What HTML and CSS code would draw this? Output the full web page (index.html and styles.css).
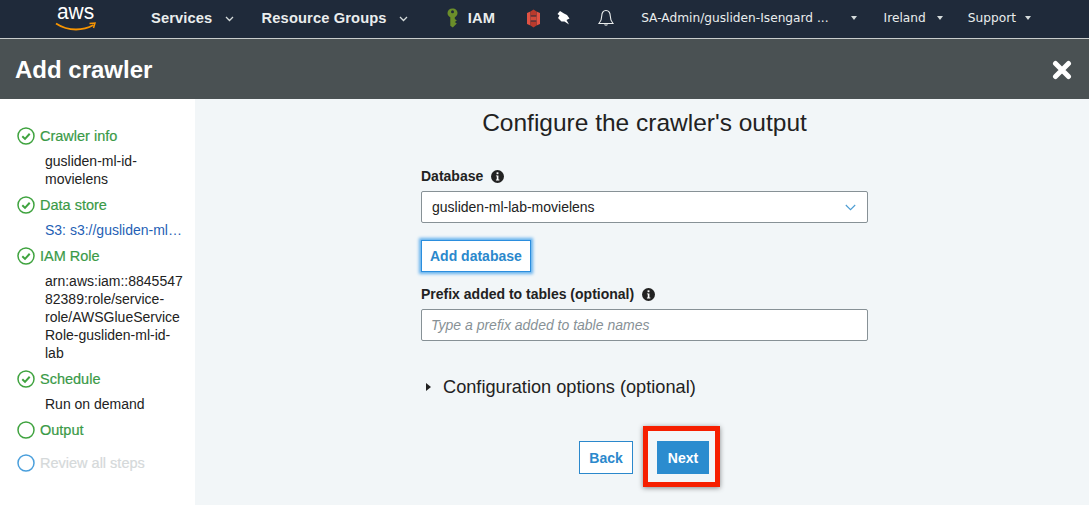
FILE: index.html
```html
<!DOCTYPE html>
<html lang="en">
<head>
    <meta charset="UTF-8">
    <title>Add crawler</title>
    <link rel="stylesheet" href="styles.css">
</head>
<body>
    <nav class="topbar">
        <div class="logo">
            <span class="logo-text">aws</span>
            <svg class="logo-smile" width="41" height="9" viewBox="0 0 41 9"><path d="M1 1.500C7 5.500 14 7.500 21 7.500C27 7.500 33 6 38.500 3" fill="none" stroke="#f79400" stroke-width="1.800"/><path d="M34.500 1.500L40 1L38.500 6" fill="none" stroke="#f79400" stroke-width="1.500"/></svg>
        </div>
        <a class="nav-item bold nav-services">Services <svg class="chev" width="9" height="6" viewBox="0 0 9 6"><path d="M1 1l3.500 3.500L8 1" fill="none" stroke="#d5dbdb" stroke-width="1.300"/></svg></a>
        <a class="nav-item bold nav-groups">Resource Groups <svg class="chev" width="9" height="6" viewBox="0 0 9 6"><path d="M1 1l3.500 3.500L8 1" fill="none" stroke="#d5dbdb" stroke-width="1.300"/></svg></a>
        <svg class="nav-key" width="11" height="20" viewBox="0 0 11 20"><path d="M5.500 0.500C8.500 0.500 10.500 2.500 10.500 5C10.500 7 9.300 8.500 7.800 9.200V11L9.800 12.500L7.800 14L9.800 15.500L5.800 19.500L3.300 17.800V9.200C1.700 8.500 0.500 7 0.500 5C0.500 2.500 2.500 0.500 5.500 0.500Z" fill="#6b8e2a"/><circle cx="5.500" cy="3.800" r="1.500" fill="#1f2a3a"/></svg>
        <a class="nav-item bold nav-iam">IAM</a>
        <svg class="nav-s3" width="13" height="19" viewBox="0 0 13 19"><path d="M0 4L3.500 2.500V16.500L0 15Z" fill="#e05243"/><path d="M13 4L9.500 2.500V16.500L13 15Z" fill="#e05243"/><path d="M3.500 2.500L6.500 0.500L9.500 2.500V6.500H3.500Z" fill="#b93a2c"/><path d="M3.500 12.500H9.500V16.500L6.500 18.500L3.500 16.500Z" fill="#b93a2c"/><rect x="3.500" y="7.500" width="6" height="4" fill="#d24a3a"/></svg>
        <svg class="nav-pin" width="13" height="14" viewBox="0 0 13 14"><path d="M3 0L7 2.500L10 4L12.500 7.500L9.500 9L12 13.500L7.500 10.500L4.500 10.500L1 7L2.500 4.500L0.500 3Z" fill="#fff"/></svg>
        <svg class="nav-bell" width="16" height="18" viewBox="0 0 16 18"><path d="M8 1.500C5 1.500 3.800 4 3.800 6.500C3.800 10 3 12 1 14.500H15C13 12 12.200 10 12.200 6.500C12.200 4 11 1.500 8 1.500Z" fill="none" stroke="#eaeded" stroke-width="1.100"/><path d="M6 15.500C6.300 17 9.700 17 10 15.500Z" fill="#eaeded"/></svg>
        <a class="nav-item mono nav-account">SA-Admin/gusliden-Isengard ...</a>
        <span class="caret nav-account-caret"></span>
        <a class="nav-item mono nav-region">Ireland</a>
        <span class="caret nav-region-caret"></span>
        <a class="nav-item mono nav-support">Support</a>
        <span class="caret"></span>
    </nav>

    <header class="title-bar">
        <h1>Add crawler</h1>
        <svg class="close" width="20" height="20" viewBox="0 0 20 20"><path d="M3.500 3.500L16.500 16.500M16.500 3.500L3.500 16.500" stroke="#fff" stroke-width="5" stroke-linecap="round"/></svg>
    </header>

    <div class="layout">
        <aside class="steps">
            <div class="step">
                <svg class="step-icon" viewBox="0 0 18 18"><circle cx="9" cy="9" r="8" fill="none" stroke="#3fa33f" stroke-width="1.500"/><path d="M5.300 9.200L8 11.900L12.700 6.800" fill="none" stroke="#3fa33f" stroke-width="2"/></svg>
                <span class="step-name">Crawler info</span>
            </div>
            <div class="step-detail">gusliden-ml-id-<br>movielens</div>
            <div class="step">
                <svg class="step-icon" viewBox="0 0 18 18"><circle cx="9" cy="9" r="8" fill="none" stroke="#3fa33f" stroke-width="1.500"/><path d="M5.300 9.200L8 11.900L12.700 6.800" fill="none" stroke="#3fa33f" stroke-width="2"/></svg>
                <span class="step-name">Data store</span>
            </div>
            <div class="step-detail link">S3: s3://gusliden-ml…</div>
            <div class="step">
                <svg class="step-icon" viewBox="0 0 18 18"><circle cx="9" cy="9" r="8" fill="none" stroke="#3fa33f" stroke-width="1.500"/><path d="M5.300 9.200L8 11.900L12.700 6.800" fill="none" stroke="#3fa33f" stroke-width="2"/></svg>
                <span class="step-name">IAM Role</span>
            </div>
            <div class="step-detail">arn:aws:iam::8845547<br>82389:role/service-<br>role/AWSGlueService<br>Role-gusliden-ml-id-<br>lab</div>
            <div class="step">
                <svg class="step-icon" viewBox="0 0 18 18"><circle cx="9" cy="9" r="8" fill="none" stroke="#3fa33f" stroke-width="1.500"/><path d="M5.300 9.200L8 11.900L12.700 6.800" fill="none" stroke="#3fa33f" stroke-width="2"/></svg>
                <span class="step-name">Schedule</span>
            </div>
            <div class="step-detail">Run on demand</div>
            <div class="step">
                <svg class="step-icon" viewBox="0 0 18 18"><circle cx="9" cy="9" r="8" fill="none" stroke="#3fa33f" stroke-width="1.500"/></svg>
                <span class="step-name">Output</span>
            </div>
            <div class="step step-next">
                <svg class="step-icon" viewBox="0 0 18 18"><circle cx="9" cy="9" r="8" fill="none" stroke="#4a9fdc" stroke-width="1.500"/></svg>
                <span class="step-name muted">Review all steps</span>
            </div>
        </aside>

        <main class="content">
            <h2>Configure the crawler's output</h2>
            <div class="form">
                <div class="field-label first">Database
                    <svg class="info" width="13" height="13" viewBox="0 0 14 14"><circle cx="7" cy="7" r="7" fill="#222"/><rect x="6" y="2.500" width="2" height="2" fill="#fff"/><path d="M5.300 5.800H8V10.300H9V11.300H5.300V10.300H6.200V6.800H5.300Z" fill="#fff"/></svg>
                </div>
                <div class="select-box">
                    <span>gusliden-ml-lab-movielens</span>
                    <svg width="11" height="7" viewBox="0 0 11 7"><path d="M0.800 1L5.500 5.700L10.200 1" fill="none" stroke="#4b9cd3" stroke-width="1.100"/></svg>
                </div>
                <button class="btn btn-focus">Add database</button>
                <div class="field-label second">Prefix added to tables (optional)
                    <svg class="info" width="13" height="13" viewBox="0 0 14 14"><circle cx="7" cy="7" r="7" fill="#222"/><rect x="6" y="2.500" width="2" height="2" fill="#fff"/><path d="M5.300 5.800H8V10.300H9V11.300H5.300V10.300H6.200V6.800H5.300Z" fill="#fff"/></svg>
                </div>
                <div class="text-box">Type a prefix added to table names</div>
                <div class="options">
                    <span class="arrow"></span>
                    <span>Configuration options (optional)</span>
                </div>
                <div class="actions">
                    <button class="btn btn-back">Back</button>
                    <div class="highlight"><button class="btn btn-next">Next</button></div>
                </div>
            </div>
        </main>
    </div>
</body>
</html>
```

FILE: styles.css
```css
* {
    box-sizing: border-box;
}
body {
    margin: 0;
    height: 505px;
    overflow: hidden;
    font-family: "Liberation Sans", Arial, sans-serif;
    font-size: 14px;
    color: #222;
    background-color: #f2f6f8;
}

/* top navigation */
.topbar {
    display: flex;
    align-items: center;
    height: 39px;
    padding-bottom: 2px;
    background-color: #1f2a3a;
    border-bottom: 1px solid #c8cccc;
    color: #eaeded;
}
.logo {
    width: 41px;
    height: 32px;
    margin-left: 55px;
    display: flex;
    flex-direction: column;
    align-items: center;
}
.logo-text {
    margin-top: 1px;
    font-size: 22px;
    line-height: 18px;
    color: #fff;
    transform: scaleX(0.95);
}
.logo-smile {
    display: block;
    flex-shrink: 0;
    margin-top: 1px;
}
.nav-item {
    white-space: nowrap;
    color: #eaeded;
}
.bold {
    font-weight: bold;
    font-size: 14.7px;
    letter-spacing: 0.12px;
}
.mono {
    font-family: "DejaVu Sans", sans-serif;
    font-size: 12.2px;
}
.chev {
    margin-left: 8px;
    vertical-align: 1px;
}
.nav-services {
    margin-left: 55px;
}
.nav-groups {
    margin-left: 28px;
}
.nav-key {
    margin-left: 39px;
}
.nav-iam {
    margin-left: 10px;
}
.nav-s3 {
    margin-left: 32px;
}
.nav-pin {
    margin-left: 17px;
}
.nav-bell {
    margin-left: 28px;
}
.nav-account {
    margin-left: 27px;
}
.caret {
    width: 0;
    height: 0;
    margin-left: 9px;
    border-left: 3.500px solid transparent;
    border-right: 3.500px solid transparent;
    border-top: 4px solid #d5dbdb;
}
.nav-account-caret {
    margin-left: 22px;
}
.nav-region {
    margin-left: 27px;
}
.nav-region-caret {
    margin-left: 11px;
}
.nav-support {
    margin-left: 25px;
}

/* dark title */
.title-bar {
    display: flex;
    align-items: center;
    justify-content: space-between;
    height: 60px;
    padding: 1px 17px 0 15px;
    background-color: #4a5153;
}
h1 {
    margin: 0;
    font-size: 24px;
    color: #fff;
}

.layout {
    display: flex;
    height: 406px;
}

/* left steps */
.steps {
    width: 195px;
    padding: 28px 8px 0 17px;
    background-color: #fff;
}
.step {
    display: flex;
    align-items: center;
    gap: 5px;
    height: 18px;
    margin-bottom: 7px;
}
.step-icon {
    width: 18px;
    height: 18px;
    flex-shrink: 0;
}
.step-name {
    font-size: 14.5px;
    color: #3a9a47;
    -webkit-text-stroke: 0.2px #3a9a47;
}
.step-name.muted {
    color: #d5d9da;
    -webkit-text-stroke: 0.2px #d5d9da;
}
.step-next {
    margin-top: 15px;
}
.step-detail {
    margin: 0 0 8px 28px;
    line-height: 18px;
    white-space: nowrap;
    color: #222;
}
.link {
    color: #1f5fb5;
}

/* main form */
.content {
    flex: 1;
}
h2 {
    margin: 10px 0 0;
    padding-left: 5px;
    font-size: 24.5px;
    font-weight: normal;
    line-height: 28px;
    text-align: center;
}
.form {
    width: 447px;
    margin-left: 226px;
}
.field-label {
    font-weight: bold;
    line-height: 18px;
    display: flex;
    align-items: center;
    gap: 8px;
}
.first {
    margin-top: 30px;
}
.second {
    margin-top: 13px;
}
.select-box, .text-box {
    display: flex;
    align-items: center;
    justify-content: space-between;
    height: 32px;
    margin-top: 6px;
    padding: 0 11px 0 10px;
    background-color: #fff;
    border: 1px solid #879196;
    border-radius: 2px;
}
.text-box {
    padding-left: 9px;
    font-style: italic;
    color: #879196;
}
.btn {
    font-family: inherit;
    font-size: 14px;
    font-weight: bold;
    cursor: pointer;
}
.btn-focus {
    display: block;
    height: 32px;
    margin-top: 17px;
    padding: 0 8px;
    background-color: #fff;
    color: #2b88cc;
    border: 1px solid #2b8ede;
    box-shadow: 0 0 3px 2px #63b0ee;
}
.options {
    display: flex;
    align-items: center;
    margin-top: 34px;
    font-size: 18.2px;
    line-height: 24px;
}
.arrow {
    width: 0;
    height: 0;
    margin: 0 12px 0 5px;
    border-top: 4.500px solid transparent;
    border-bottom: 4.500px solid transparent;
    border-left: 5px solid #222;
}
.actions {
    display: flex;
    align-items: center;
    margin-top: 27px;
    padding-left: 158px;
}
.btn-back {
    width: 54px;
    height: 33px;
    margin-top: 2px;
    margin-right: 10px;
    padding: 0;
    background-color: #fff;
    color: #2b88cc;
    border: 1px solid #2b88cc;
}
.highlight {
    padding: 10px 6px 8px 9px;
    border: 5px solid #f61f00;
    box-shadow: 0 1px 5px rgba(0,0,0,0.45);
}
.btn-next {
    display: block;
    width: 52px;
    height: 33px;
    padding: 0;
    background-color: #2b8ccf;
    color: #fff;
    border: none;
}
```
